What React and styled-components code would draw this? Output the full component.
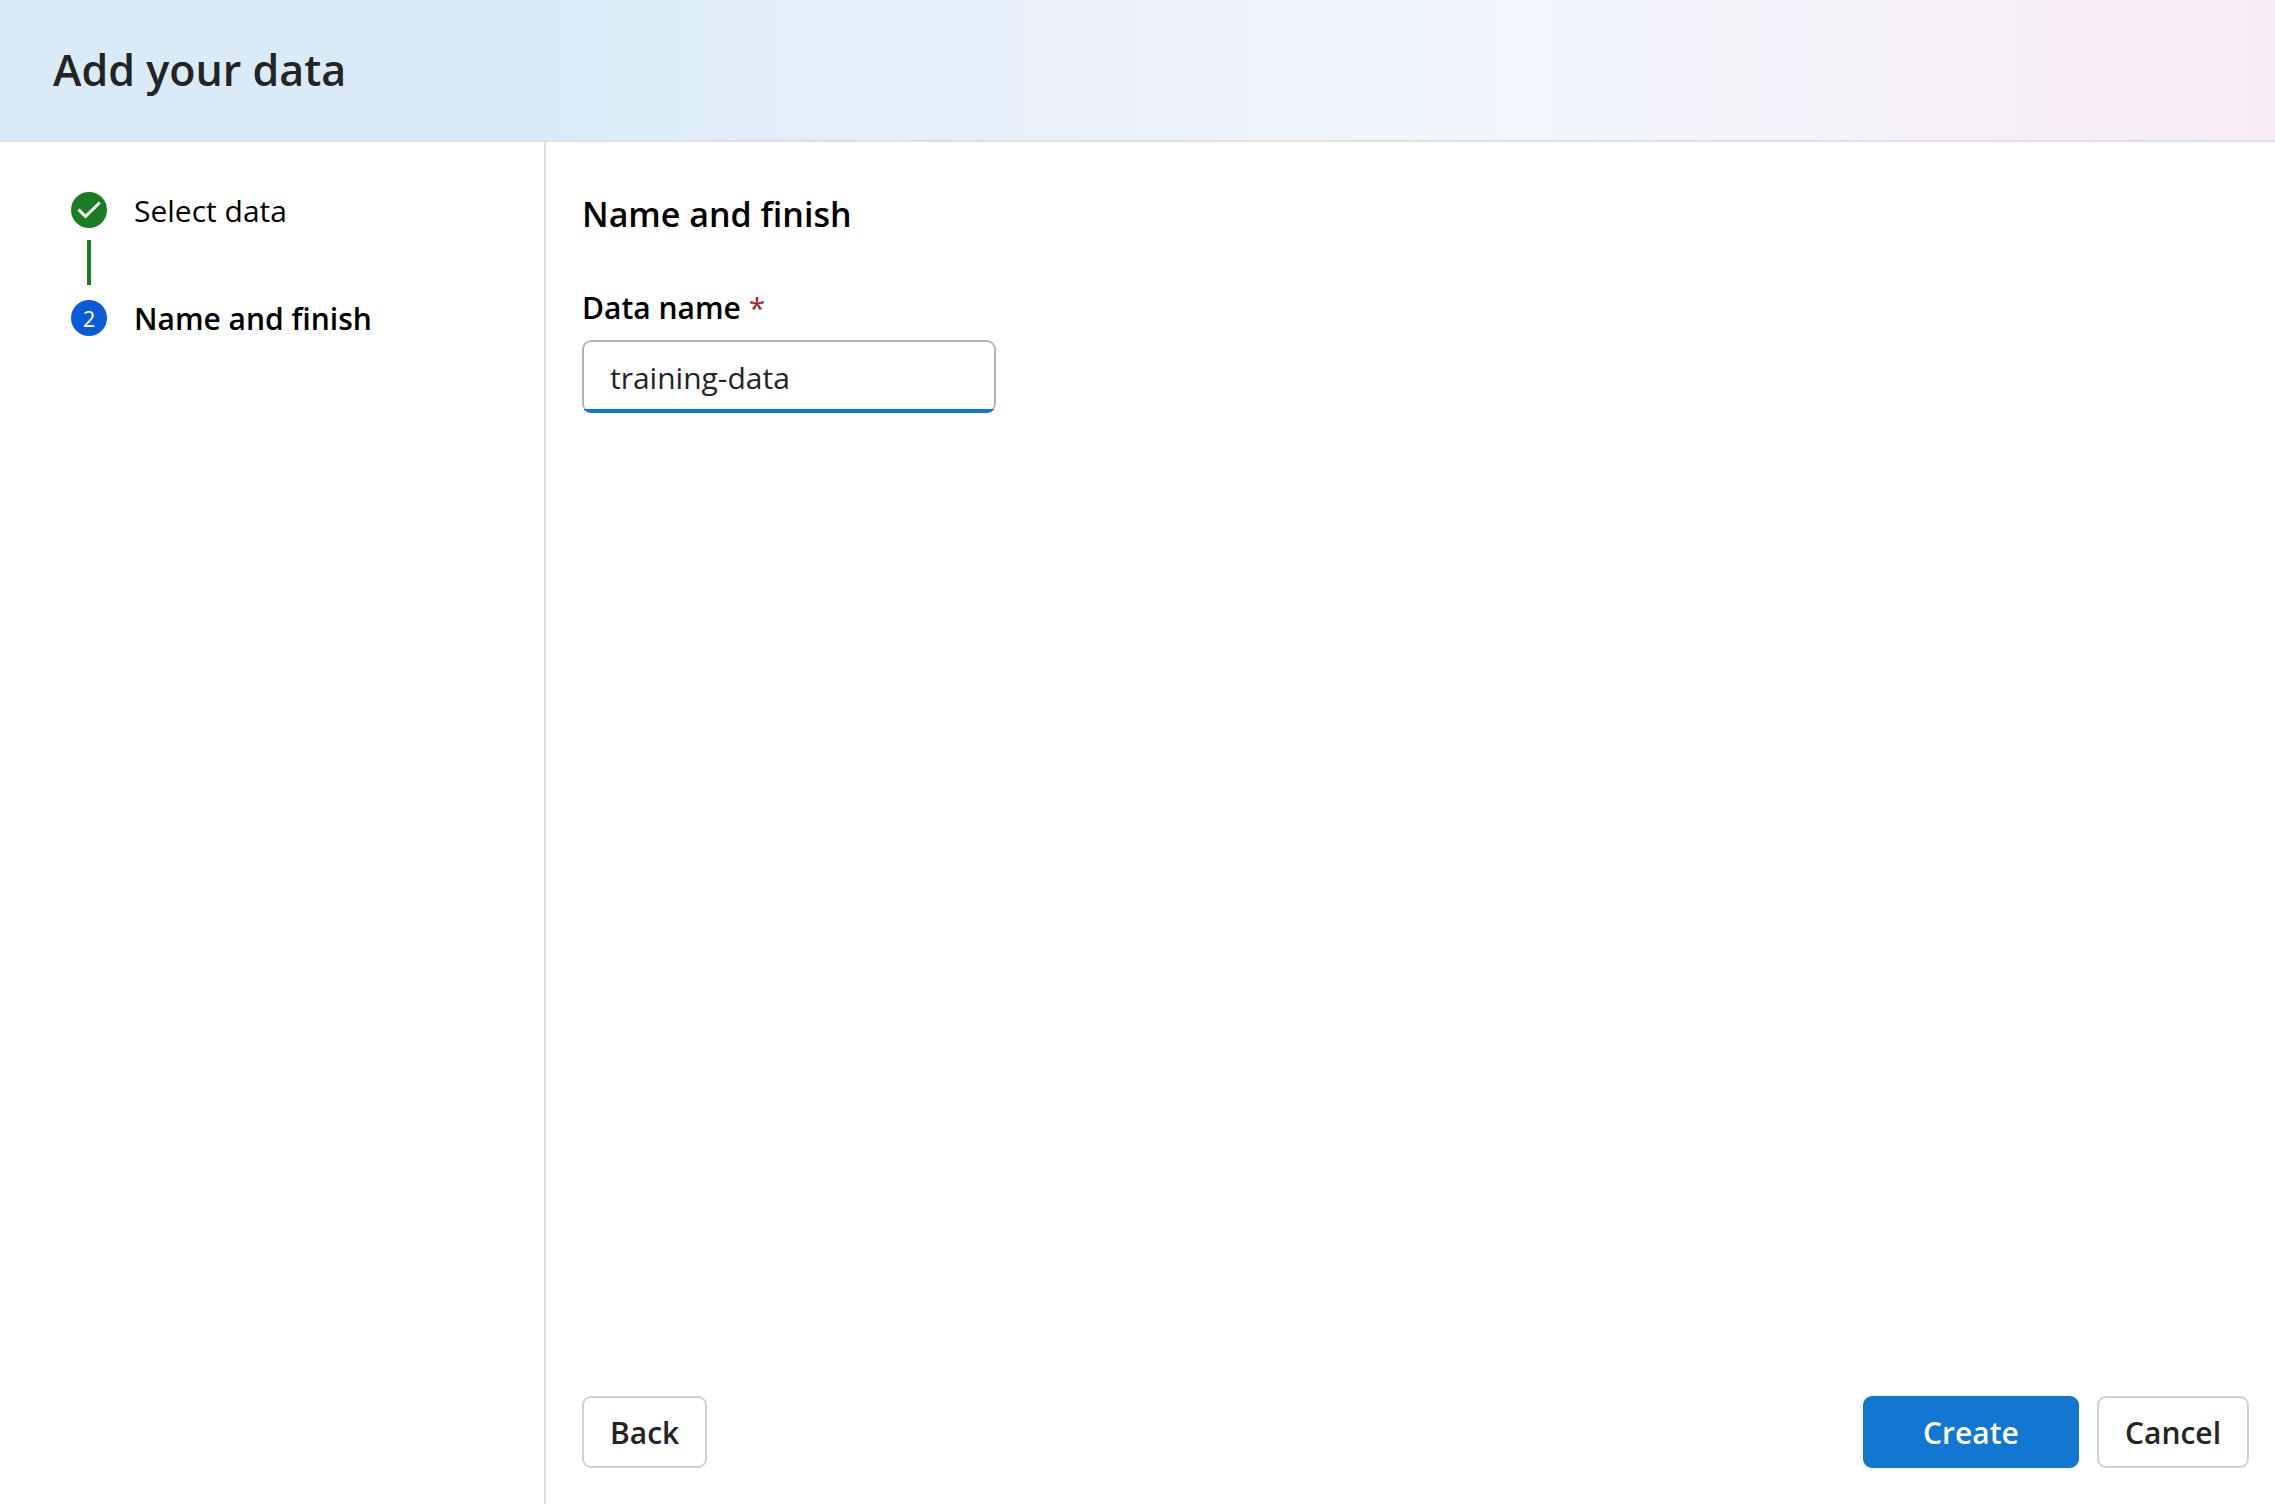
import React, { useState } from "react";
import styled, { createGlobalStyle } from "styled-components";

const GlobalStyle = createGlobalStyle`
  *, *::before, *::after { box-sizing: border-box; }
  body {
    margin: 0;
    background: #fff;
    color: #000;
    font-family: "Segoe UI", "Open Sans", "Noto Sans", sans-serif;
    font-size: 30px;
    line-height: 44px;
  }
`;

const Page = styled.div`
  display: flex;
  flex-direction: column;
  min-height: 100vh;
`;

const Header = styled.header`
  display: flex;
  align-items: center;
  min-height: 142px;
  padding: 0 53px;
  border-bottom: 2px solid #e0e0e0;
  background: linear-gradient(90deg, #d9ebf7 0%, #d9ebf7 22%, #f2f7fd 67%, #f9ebf5 100%);
`;

const Title = styled.h1`
  margin: 0;
  color: #242424;
  font-size: 43px;
  line-height: 60px;
  font-weight: 600;
`;

const Body = styled.div`
  display: flex;
  flex: 1;
`;

const Sidebar = styled.nav`
  flex: 0 0 546px;
  padding: 50px 71px;
  border-right: 2px solid #e0e0e0;
`;

const Steps = styled.ol`
  margin: 0;
  padding: 0;
  list-style: none;
`;

const Step = styled.li`
  display: grid;
  grid-template-columns: 36px 1fr;
  column-gap: 27px;
  line-height: 36px;
  font-weight: ${(p) => (p.$current ? 600 : 400)};
`;

const StepName = styled.span`
  padding-top: 1px;
  line-height: 35px;
`;

const Marker = styled.span`
  display: flex;
  align-items: center;
  justify-content: center;
  width: 36px;
  height: 36px;
  border-radius: 50%;
  background: ${(p) => (p.$done ? "#1b7c24" : "#0b5bd7")};
  color: #fff;
  font-size: 22px;
  font-weight: 400;
`;

const Connector = styled.span`
  justify-self: center;
  width: 4px;
  height: 45px;
  margin: 12px 0 15px;
  background: #1b7c24;
`;

const Main = styled.main`
  display: flex;
  flex: 1;
  flex-direction: column;
  padding: 48px 26px 36px 36px;
`;

const Heading = styled.h2`
  margin: 0 0 48px;
  font-size: 34px;
  line-height: 48px;
  font-weight: 600;
`;

const Field = styled.div`
  display: flex;
  flex-direction: column;
  gap: 10px;
  width: 414px;
`;

const Label = styled.label`
  font-weight: 600;
`;

const Required = styled.span`
  color: #a4262c;
  font-weight: 400;
`;

const InputBox = styled.div`
  position: relative;
  height: 73px;
  border-radius: 9px;
  overflow: hidden;

  &::after {
    content: "";
    position: absolute;
    inset: auto 0 0;
    height: 4px;
    background: #1277d1;
  }
`;

const Input = styled.input`
  width: 100%;
  height: 100%;
  padding: 2px 26px 0;
  border: 2px solid #b3b3b3;
  border-radius: 9px;
  outline: none;
  background: #fff;
  color: #242424;
  font: inherit;
`;

const Footer = styled.footer`
  display: flex;
  gap: 18px;
  margin-top: auto;
`;

const Button = styled.button`
  height: 72px;
  min-width: ${(p) => (p.$primary ? 216 : 124)}px;
  margin-right: ${(p) => (p.$start ? "auto" : 0)};
  padding: 2px 26px 0;
  border: 2px solid ${(p) => (p.$primary ? "#1277d1" : "#d1d1d1")};
  border-radius: 9px;
  background: ${(p) => (p.$primary ? "#1277d1" : "#fff")};
  color: ${(p) => (p.$primary ? "#fff" : "#242424")};
  font: inherit;
  font-weight: 600;
`;

function Check() {
  return (
    <svg width="36" height="36" viewBox="0 0 36 36" fill="none" aria-hidden="true">
      <path d="M7.5 17.5 L14.5 24.5 L28.8 10.5" stroke="#fff" strokeWidth="3" />
    </svg>
  );
}

export default function App() {
  const [name, setName] = useState("training-data");
  return (
    <Page>
      <GlobalStyle />
      <Header>
        <Title>Add your data</Title>
      </Header>
      <Body>
        <Sidebar aria-label="Steps">
          <Steps>
            <Step>
              <Marker $done>
                <Check />
              </Marker>
              <StepName>Select data</StepName>
              <Connector />
            </Step>
            <Step $current aria-current="step">
              <Marker>2</Marker>
              <StepName>Name and finish</StepName>
            </Step>
          </Steps>
        </Sidebar>
        <Main>
          <Heading>Name and finish</Heading>
          <Field>
            <Label htmlFor="data-name">
              Data name <Required>*</Required>
            </Label>
            <InputBox>
              <Input
                id="data-name"
                type="text"
                required
                value={name}
                onChange={(e) => setName(e.target.value)}
              />
            </InputBox>
          </Field>
          <Footer>
            <Button type="button" $start>Back</Button>
            <Button type="button" $primary>Create</Button>
            <Button type="button">Cancel</Button>
          </Footer>
        </Main>
      </Body>
    </Page>
  );
}
